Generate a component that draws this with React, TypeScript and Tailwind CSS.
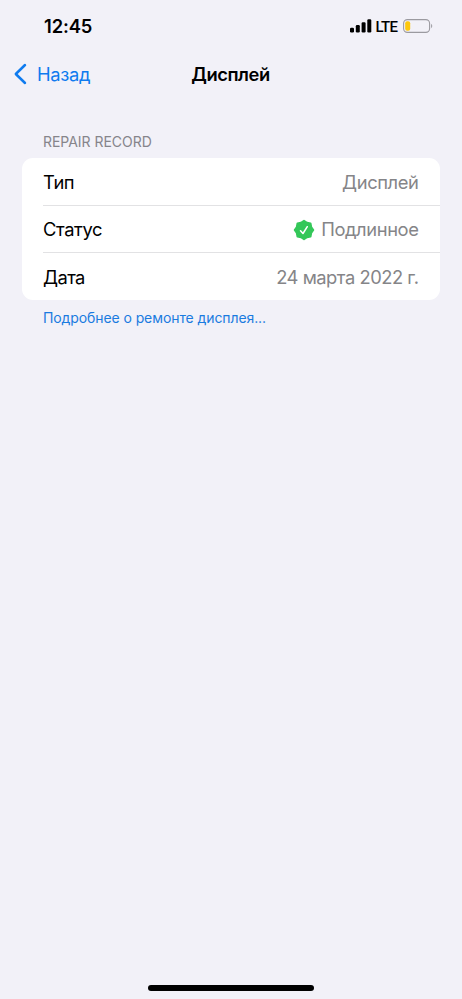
import type { ReactNode } from 'react';

type Row = {
  label: string;
  value: string;
  labelClass: string;
  valueClass: string;
  icon?: ReactNode;
};

const ROWS: Row[] = [
  { label: 'Тип', value: 'Дисплей', labelClass: 'tracking-[-0.4px]', valueClass: 'tracking-[-0.4px]' },
  {
    label: 'Статус',
    value: 'Подлинное',
    labelClass: 'tracking-[-0.4px]',
    valueClass: 'tracking-[-0.4px]',
    icon: <SealIcon />,
  },
  { label: 'Дата', value: '24 марта 2022 г.', labelClass: 'tracking-[-0.6px]', valueClass: 'tracking-[-0.48px]' },
];

export default function App() {
  return (
    <div className="flex h-[999px] w-[462px] flex-col bg-[#f2f1f8] font-['Inter','Liberation_Sans',sans-serif] text-black">
      <StatusBar />
      <NavBar />

      <main className="flex-1 px-[22px] pt-[35px]">
        <h2 className="pl-[21px] text-[14px] leading-[20px] text-[#86858b]">
          <span className="tracking-[-0.03px]">REPAIR RECORD</span>
        </h2>
        <ul className="mt-[5.5px] w-[418px] overflow-hidden rounded-[11px] bg-white text-[18.35px]">
          {ROWS.map((row, i) => (
            <li key={row.label} className="relative h-[47.5px] pl-[21px]">
              {i > 0 && <div className="absolute top-[-0.5px] right-0 left-[21px] h-px bg-[#e2e2e4]" />}
              <div className="flex h-full items-center justify-between pt-[2.75px] pr-[21.5px]">
                <span className={row.labelClass}>{row.label}</span>
                <div className="flex items-center gap-[6px] text-[#858588]">
                  {row.icon}
                  <span className={row.valueClass}>{row.value}</span>
                </div>
              </div>
            </li>
          ))}
        </ul>
        <a className="mt-[7.5px] block pl-[21px] text-[14px] leading-[20px] text-[#1a7be0]">
          <span className="tracking-[-0.09px]">Подробнее о ремонте дисплея...</span>
        </a>
      </main>

      <div className="mx-auto mb-[8px] h-[6px] w-[166px] rounded-full bg-black" />
    </div>
  );
}

function StatusBar() {
  return (
    <header className="flex h-[52px] items-center justify-between pr-[29px] pl-[44px]">
      <span className="pt-[2px] text-[18.35px] font-semibold tracking-[-0.1px]">12:45</span>
      <div className="flex items-center">
        <svg width="22" height="14" viewBox="0 0 22 14">
          <rect x="0" y="8.8" width="4" height="4.7" rx="1.2" />
          <rect x="5.8" y="6" width="4" height="7.5" rx="1.2" />
          <rect x="11.6" y="3.2" width="4" height="10.3" rx="1.2" />
          <rect x="17.3" y="0.2" width="4" height="13.3" rx="1.2" />
        </svg>
        <span className="ml-[3.5px] w-[22.5px] pt-[2px] font-['Roboto','Liberation_Sans',sans-serif] text-[15px] font-medium tracking-[-0.7px]">
          LTE
        </span>
        <svg className="ml-[5px]" width="30" height="14" viewBox="0 0 30 14">
          <rect x="0.6" y="0.6" width="26" height="12.8" rx="3.8" fill="none" stroke="#9b9aa0" strokeWidth="1.1" />
          <rect x="2.2" y="2.2" width="5" height="9.6" rx="2" fill="#fdc70b" />
          <path d="M28.1 4.8c1.5.7 1.5 3.7 0 4.4z" fill="#9b9aa0" />
        </svg>
      </div>
    </header>
  );
}

function NavBar() {
  return (
    <nav className="grid h-[45px] grid-cols-[1fr_auto_1fr] items-center px-[14px] text-[18.35px]">
      <a className="flex items-center gap-[10px] text-[#0f7bef]">
        <svg width="13" height="22" viewBox="0 0 13 22" fill="none" stroke="currentColor" strokeWidth="2.5" strokeLinecap="round" strokeLinejoin="round">
          <path d="M11 2 1.8 11 11 20" />
        </svg>
        <span className="tracking-[-0.3px]">Назад</span>
      </a>
      <h1 className="pr-px font-semibold tracking-[-0.45px]">Дисплей</h1>
    </nav>
  );
}

function SealIcon() {
  return (
    <svg width="22" height="22" viewBox="0 0 24 24">
      <path
        d="M12 1.8 15.3 4.1 19.2 4.8 19.9 8.7 22.2 12 19.9 15.3 19.2 19.2 15.3 19.9 12 22.2 8.7 19.9 4.8 19.2 4.1 15.3 1.8 12 4.1 8.7 4.8 4.8 8.7 4.1z"
        fill="#34c759"
        stroke="#34c759"
        strokeWidth="2"
        strokeLinejoin="round"
      />
      <path d="M8.2 12.8 10.9 15.8 15.6 8.4" fill="none" stroke="#fff" strokeWidth="1.7" strokeLinecap="round" strokeLinejoin="round" />
    </svg>
  );
}
